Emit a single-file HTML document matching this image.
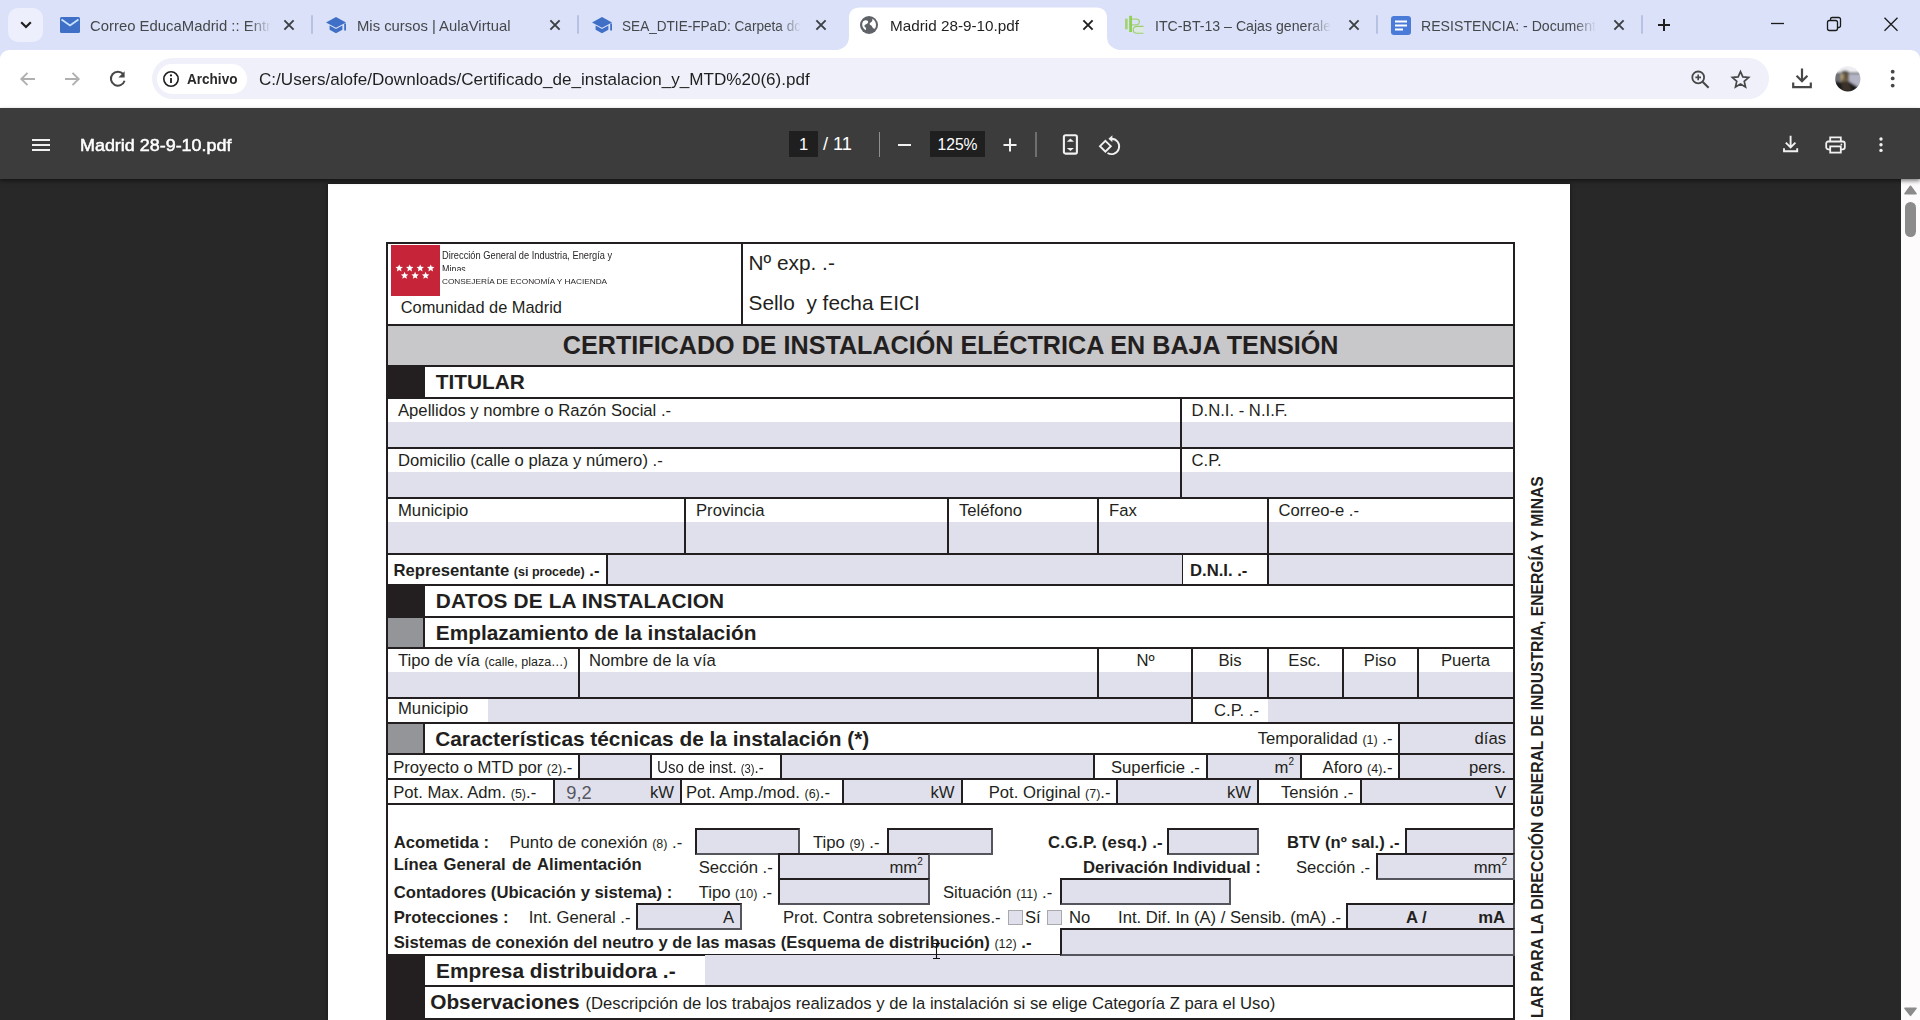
<!DOCTYPE html>
<html lang="es"><head><meta charset="utf-8"><title>Madrid 28-9-10.pdf</title>
<style>
html,body{margin:0;padding:0}
body{width:1920px;height:1020px;overflow:hidden;position:relative;background:#282828;font-family:"Liberation Sans",sans-serif;}
.t{position:absolute;white-space:pre;margin:0;padding:0}
.s{font-size:12.5px}
svg{position:absolute;overflow:visible}
</style></head><body>
<div style="position:absolute;left:0px;top:0px;width:1920px;height:62px;background:#dae1f8;"></div>
<div style="position:absolute;left:0px;top:50px;width:1920px;height:58px;background:#ffffff;border-radius:9px 9px 0 0;"></div>
<div style="position:absolute;left:8px;top:8px;width:35px;height:34px;background:#eeeffc;border-radius:10px;"></div>
<svg style="left:19px;top:20px" width="14" height="10" viewBox="0 0 14 10"><path d="M2.2 2.2L7 7l4.8-4.8" fill="none" stroke="#1f1f1f" stroke-width="2.2"/></svg>
<svg style="left:0;top:0" width="1920" height="51"><path d="M832 50.5 C843 50 849 46 849 36 L849 18 C849 11 853 7.5 860 7.5 L1096 7.5 C1103 7.5 1107 11 1107 18 L1107 36 C1107 46 1113 50 1125 50.5 L1125 51 L832 51 Z" fill="#fff"/></svg>
<svg style="left:60px;top:17px" width="20" height="16" viewBox="0 0 20 16"><rect width="20" height="16" rx="1.5" fill="#3f6fc6"/><path d="M1.5 2.5L10 8.5L18.5 2.5" fill="none" stroke="#c9e4ff" stroke-width="1.8"/></svg>
<div class="t" style="left:90px;top:17.00px;font-size:15.0px;line-height:18.0px;color:#45474a;transform:scaleX(0.9913);transform-origin:left;width:182.58px;overflow:hidden;-webkit-mask-image:linear-gradient(90deg,#000 160.39px,transparent 182.58px);mask-image:linear-gradient(90deg,#000 160.39px,transparent 182.58px);">Correo EducaMadrid :: Entr</div>
<svg style="left:281px;top:17px" width="16" height="16" viewBox="-8 -8 16 16"><path d="M-4.6 -4.6L4.6 4.6M4.6 -4.6L-4.6 4.6" stroke="#3c4043" stroke-width="1.9" fill="none"/></svg>
<div style="position:absolute;left:311px;top:15px;width:2px;height:19px;background:#b7c1e2;border-radius:1px;"></div>
<svg style="left:326px;top:16.5px" width="21" height="17" viewBox="0 0 21 17"><path d="M10 0L0 5.4L10 10.8L20 5.4Z" fill="#3f6fc6"/><path d="M3.6 8.6v4.1L10 16.2l6.4-3.5V8.6L10 12.1Z" fill="#3f6fc6"/><path d="M18.2 6.4h1.8v7h-1.8z" fill="#3f6fc6"/></svg>
<div class="t" style="left:356.5px;top:17.00px;font-size:15.0px;line-height:18.0px;color:#45474a;transform:scaleX(0.9881);transform-origin:left;">Mis cursos | AulaVirtual</div>
<svg style="left:547px;top:17px" width="16" height="16" viewBox="-8 -8 16 16"><path d="M-4.6 -4.6L4.6 4.6M4.6 -4.6L-4.6 4.6" stroke="#3c4043" stroke-width="1.9" fill="none"/></svg>
<div style="position:absolute;left:577px;top:15px;width:2px;height:19px;background:#b7c1e2;border-radius:1px;"></div>
<svg style="left:592px;top:16.5px" width="21" height="17" viewBox="0 0 21 17"><path d="M10 0L0 5.4L10 10.8L20 5.4Z" fill="#3f6fc6"/><path d="M3.6 8.6v4.1L10 16.2l6.4-3.5V8.6L10 12.1Z" fill="#3f6fc6"/><path d="M18.2 6.4h1.8v7h-1.8z" fill="#3f6fc6"/></svg>
<div class="t" style="left:622px;top:17.00px;font-size:15.0px;line-height:18.0px;color:#45474a;transform:scaleX(0.9060);transform-origin:left;width:197.58px;overflow:hidden;-webkit-mask-image:linear-gradient(90deg,#000 173.29px,transparent 197.58px);mask-image:linear-gradient(90deg,#000 173.29px,transparent 197.58px);">SEA_DTIE-FPaD: Carpeta dc</div>
<svg style="left:813px;top:17px" width="16" height="16" viewBox="-8 -8 16 16"><path d="M-4.6 -4.6L4.6 4.6M4.6 -4.6L-4.6 4.6" stroke="#3c4043" stroke-width="1.9" fill="none"/></svg>
<svg style="left:860px;top:16px" width="18" height="18" viewBox="0 0 18 18"><circle cx="9" cy="9" r="9" fill="#5f6368"/><path d="M3.2 5.2C5 3.8 7.2 4 8 5.2C8.8 6.6 7 7.8 5.6 8.4C4.2 9 4 10.4 5.2 11.2C6.2 11.8 6.4 13 5.6 14.2C3.6 13 2.2 11 2.2 8.6C2.2 7.2 2.6 6 3.2 5.2Z" fill="#fff"/><path d="M12.2 2.8C14.6 4 16 6.4 16 9C16 10.4 15.6 11.6 15 12.6C13.6 12.8 12.4 12 12.2 10.8C12 9.6 10.4 9.6 9.8 8.6C9.2 7.4 10.4 6.4 11.4 6C12.4 5.4 12.6 4 12.2 2.8Z" fill="#fff"/></svg>
<div class="t" style="left:889.5px;top:17.00px;font-size:15.0px;line-height:18.0px;color:#1f1f1f;transform:scaleX(1.0178);transform-origin:left;">Madrid 28-9-10.pdf</div>
<svg style="left:1079.5px;top:17px" width="16" height="16" viewBox="-8 -8 16 16"><path d="M-4.6 -4.6L4.6 4.6M4.6 -4.6L-4.6 4.6" stroke="#1f1f1f" stroke-width="1.9" fill="none"/></svg>
<svg style="left:1124px;top:15px" width="22" height="20" viewBox="0 0 22 20"><rect x="1.100" y="3.700" width="2.500" height="10.600" fill="#a2d070"/><rect x="5.200" y="0.800" width="2.800" height="16.200" fill="#90d24f"/><path d="M8 4.200h4c4.500 0 4.500 5.600 0 5.600h-4" fill="none" stroke="#a5d47a" stroke-width="1.300"/><path d="M19.500 11.400h-6.500c-5 0-5 6.800 0 6.800h6.500" fill="#dcefd0" fill-opacity=".6" stroke="#9ccf6c" stroke-width="1.100"/></svg>
<div class="t" style="left:1155px;top:17.00px;font-size:15.0px;line-height:18.0px;color:#45474a;transform:scaleX(0.9424);transform-origin:left;width:186.76px;overflow:hidden;-webkit-mask-image:linear-gradient(90deg,#000 163.41px,transparent 186.76px);mask-image:linear-gradient(90deg,#000 163.41px,transparent 186.76px);">ITC-BT-13 – Cajas generale</div>
<svg style="left:1346px;top:17px" width="16" height="16" viewBox="-8 -8 16 16"><path d="M-4.6 -4.6L4.6 4.6M4.6 -4.6L-4.6 4.6" stroke="#3c4043" stroke-width="1.9" fill="none"/></svg>
<div style="position:absolute;left:1376px;top:15px;width:2px;height:19px;background:#b7c1e2;border-radius:1px;"></div>
<svg style="left:1391px;top:15.5px" width="20" height="19" viewBox="0 0 20 19"><rect width="20" height="19" rx="3" fill="#4a7bd8"/><path d="M4 5.6h12M4 9.5h12M4 13.4h8" stroke="#fff" stroke-width="2"/></svg>
<div class="t" style="left:1421px;top:17.00px;font-size:15.0px;line-height:18.0px;color:#45474a;transform:scaleX(0.9414);transform-origin:left;width:185.89px;overflow:hidden;-webkit-mask-image:linear-gradient(90deg,#000 162.52px,transparent 185.89px);mask-image:linear-gradient(90deg,#000 162.52px,transparent 185.89px);">RESISTENCIA: - Document</div>
<svg style="left:1611px;top:17px" width="16" height="16" viewBox="-8 -8 16 16"><path d="M-4.6 -4.6L4.6 4.6M4.6 -4.6L-4.6 4.6" stroke="#3c4043" stroke-width="1.9" fill="none"/></svg>
<div style="position:absolute;left:1641px;top:15px;width:2px;height:19px;background:#b7c1e2;border-radius:1px;"></div>
<svg style="left:1656px;top:17px" width="16" height="16" viewBox="0 0 16 16"><path d="M8 2v12M2 8h12" stroke="#1f1f1f" stroke-width="2" fill="none"/></svg>
<svg style="left:1760px;top:10px" width="150" height="30" viewBox="0 0 150 30"><g fill="none" stroke="#1b1b1b" stroke-width="1.3"><path d="M11 13.5h13"/><rect x="67.5" y="10.5" width="10" height="10" rx="2"/><path d="M70.5 10.5v-1.2a1.8 1.8 0 0 1 1.8-1.8h6.4a1.8 1.8 0 0 1 1.8 1.8v6.4a1.8 1.8 0 0 1 -1.8 1.8h-1.2"/><path d="M124.5 7.8l13 13M137.5 7.8l-13 13"/></g></svg>
<svg style="left:18px;top:69px" width="20" height="20" viewBox="0 0 20 20"><path d="M17 10H3.5M9.5 3.8L3.3 10l6.2 6.2" fill="none" stroke="#b0b0b0" stroke-width="1.9"/></svg>
<svg style="left:62px;top:69px" width="20" height="20" viewBox="0 0 20 20"><path d="M3 10h13.5M10.5 3.8L16.7 10l-6.2 6.2" fill="none" stroke="#b0b0b0" stroke-width="1.9"/></svg>
<svg style="left:107px;top:68px" width="22" height="22" viewBox="0 0 22 22"><path d="M16.3 6.2A7 7 0 1 0 17.6 12.8" fill="none" stroke="#474747" stroke-width="2"/><path d="M17.6 3.2v6.2h-6.2z" fill="#474747"/></svg>
<div style="position:absolute;left:152px;top:58px;width:1617px;height:41px;background:#f0f0fb;border-radius:20.5px;"></div>
<div style="position:absolute;left:157px;top:64px;width:90px;height:30px;background:#ffffff;border-radius:15px;"></div>
<svg style="left:162px;top:70px" width="18" height="18" viewBox="0 0 18 18"><circle cx="9" cy="9" r="7.2" fill="none" stroke="#1f1f1f" stroke-width="1.6"/><path d="M9 8v5" stroke="#1f1f1f" stroke-width="1.8"/><circle cx="9" cy="5.4" r="1.1" fill="#1f1f1f"/></svg>
<div class="t" style="left:187px;top:72.30px;font-size:13.56px;line-height:16.27px;font-weight:700;color:#2a2a2a;transform:scaleY(1.04);">Archivo</div>
<div class="t" style="left:259px;top:70.00px;font-size:17.1px;line-height:20.52px;color:#1f1f1f;transform:scaleX(0.9995);transform-origin:left;">C:/Users/alofe/Downloads/Certificado_de_instalacion_y_MTD%20(6).pdf</div>
<svg style="left:1690px;top:69px" width="21" height="21" viewBox="0 0 21 21"><circle cx="8.2" cy="8.4" r="5.9" fill="none" stroke="#474747" stroke-width="1.8"/><path d="M12.6 12.8l6 6" stroke="#474747" stroke-width="2.1"/><path d="M8.2 5.6v5.6M5.4 8.4h5.6" stroke="#474747" stroke-width="1.6"/></svg>
<svg style="left:1730px;top:69px" width="21" height="21" viewBox="0 0 21 21"><path d="M10.5 2.6l2.35 5.35 5.8.55-4.4 3.85 1.3 5.7-5.05-3-5.05 3 1.3-5.7-4.4-3.85 5.8-.55z" fill="none" stroke="#474747" stroke-width="1.7" stroke-linejoin="miter"/></svg>
<svg style="left:1791px;top:67px" width="22" height="22" viewBox="0 0 22 22"><path d="M11 1.5v12.5M5.6 8.8L11 14.2l5.4-5.4" fill="none" stroke="#474747" stroke-width="2.2"/><path d="M2.2 15.5v4.6h17.6v-4.6" fill="none" stroke="#474747" stroke-width="2.2"/></svg>
<svg style="left:1834.5px;top:65.5px" width="26" height="26" viewBox="0 0 26 26"><defs><clipPath id="av"><circle cx="12.8" cy="12.8" r="12.6"/></clipPath><filter id="avb" x="-10%" y="-10%" width="120%" height="120%"><feGaussianBlur stdDeviation="0.9"/></filter></defs><g clip-path="url(#av)"><g filter="url(#avb)"><rect x="-2" y="-2" width="30" height="30" fill="#eceef1"/><rect x="-2" y="7" width="30" height="22" fill="#9a9aa6"/><rect x="-2" y="6.600" width="30" height="1.6" fill="#4a4a50"/><rect x="-2" y="7.500" width="7" height="9" fill="#707076"/><path d="M14 8h14v12l-6 3-8-8z" fill="#b4b5c4"/><path d="M-2 15l8 1 7-1 10 6 5 -1v10h-30z" fill="#1f1b1d"/><ellipse cx="9.600" cy="11.5" rx="4.400" ry="6.200" fill="#6a5d42"/><ellipse cx="7" cy="10.5" rx="1.300" ry="3.600" fill="#b3a47c"/><ellipse cx="10" cy="6.200" rx="3.800" ry="1.800" fill="#55504a"/><ellipse cx="11.600" cy="10" rx="1" ry=".8" fill="#3a3226"/><path d="M6.500 16l7 -1 3 10h-9z" fill="#3a322a"/></g></g></svg>
<svg style="left:1889px;top:68px" width="8" height="22" viewBox="0 0 8 22"><circle cx="3.7" cy="3.7" r="1.9" fill="#474747"/><circle cx="3.7" cy="10.4" r="1.9" fill="#474747"/><circle cx="3.7" cy="17.6" r="1.9" fill="#474747"/></svg>
<div style="position:absolute;left:0px;top:108px;width:1920px;height:71px;background:#3c3c3c;box-shadow:0 2px 4px rgba(0,0,0,.5);z-index:2;"></div>
<div style="position:absolute;left:32px;top:139px;width:17.5px;height:2px;background:#f1f1f1;z-index:3;"></div>
<div style="position:absolute;left:32px;top:144px;width:17.5px;height:2px;background:#f1f1f1;z-index:3;"></div>
<div style="position:absolute;left:32px;top:149px;width:17.5px;height:2px;background:#f1f1f1;z-index:3;"></div>
<div class="t" style="left:80.3px;top:135.50px;font-size:16.6px;line-height:19.92px;color:#ffffff;z-index:3;-webkit-text-stroke:.5px #fff;transform:scaleX(1.0801);transform-origin:left;">Madrid 28-9-10.pdf</div>
<div style="position:absolute;left:789px;top:131px;width:29px;height:26px;background:#1f1f1f;z-index:3;"></div>
<div class="t" style="left:803.5px;transform:translateX(-50%);top:135.00px;font-size:16.5px;line-height:19.8px;color:#ffffff;z-index:3;">1</div>
<div class="t" style="left:823px;top:134.00px;font-size:18.2px;line-height:21.84px;color:#ffffff;z-index:3;">/ 11</div>
<div style="position:absolute;left:878.5px;top:132px;width:1.5px;height:25px;background:#8f8f8f;z-index:3;"></div>
<div style="position:absolute;left:898px;top:144px;width:13px;height:2px;background:#f1f1f1;z-index:3;"></div>
<div style="position:absolute;left:930px;top:131px;width:55px;height:26px;background:#1f1f1f;z-index:3;"></div>
<div class="t" style="left:957.5px;transform:translateX(-50%);top:136.00px;font-size:15.64px;line-height:18.77px;color:#ffffff;z-index:3;">125%</div>
<svg style="left:1003px;top:138px;z-index:3;" width="14" height="14" viewBox="0 0 14 14"><path d="M7 0.5v13M0.5 7h13" stroke="#f1f1f1" stroke-width="2"/></svg>
<div style="position:absolute;left:1035px;top:132px;width:1.5px;height:25px;background:#6f6f6f;z-index:3;"></div>
<svg style="left:1062px;top:134px;z-index:3;" width="17" height="21" viewBox="0 0 17 21"><rect x="1.9" y="1.2" width="13" height="18.4" rx="1.6" fill="none" stroke="#f1f1f1" stroke-width="2.1"/><path d="M8.4 4.600l3.600 3.200h-7.200zM8.4 17.100l3.600-3.200h-7.200z" fill="#f1f1f1"/></svg>
<svg style="left:1098px;top:133px;z-index:3;" width="24" height="24" viewBox="0 0 24 24"><path d="M7.400 7.800l5.400 5.400-5.400 5.400-5.400-5.400z" fill="none" stroke="#f1f1f1" stroke-width="1.9"/><path d="M13.500 5.700a7.700 7.700 0 1 1 -4 14.300" fill="none" stroke="#f1f1f1" stroke-width="1.9"/><path d="M14.400 2.200v7l-4-3.500z" fill="#f1f1f1"/></svg>
<svg style="left:1783px;top:135px;z-index:3;" width="16" height="18" viewBox="0 0 16 18"><path d="M7.600 0.700v11.300M2.800 7.600l4.800 4.800 4.800-4.800" fill="none" stroke="#f1f1f1" stroke-width="1.9"/><path d="M1 13.300v3h13.200v-3" fill="none" stroke="#f1f1f1" stroke-width="1.9"/></svg>
<svg style="left:1825px;top:135.500px;z-index:3;" width="21" height="18" viewBox="0 0 21 18"><path d="M5.200 5.500V1.400h10.600V5.500" fill="none" stroke="#f1f1f1" stroke-width="1.8"/><rect x="1.200" y="5.500" width="18.600" height="7.800" rx="2" fill="none" stroke="#f1f1f1" stroke-width="1.8"/><rect x="5.200" y="10.400" width="10.600" height="6.200" fill="#3c3c3c" stroke="#f1f1f1" stroke-width="1.8"/><circle cx="16.400" cy="8.400" r=".9" fill="#f1f1f1"/></svg>
<svg style="left:1877.600px;top:136px;z-index:3;" width="6" height="18" viewBox="0 0 6 18"><circle cx="3" cy="3" r="1.700" fill="#f1f1f1"/><circle cx="3" cy="8.700" r="1.700" fill="#f1f1f1"/><circle cx="3" cy="14.400" r="1.700" fill="#f1f1f1"/></svg>
<div style="position:absolute;left:0px;top:179px;width:1920px;height:841px;background:#282828;"></div>
<div style="position:absolute;left:328px;top:184px;width:1242px;height:836px;background:#ffffff;box-shadow:0 0 4px rgba(0,0,0,.5);"></div>
<div style="position:absolute;left:386px;top:326px;width:1127px;height:39px;background:#c8c7c9;"></div>
<div style="position:absolute;left:386px;top:366px;width:39px;height:32px;background:#231f20;"></div>
<div style="position:absolute;left:386px;top:586px;width:39px;height:31px;background:#231f20;"></div>
<div style="position:absolute;left:386px;top:618px;width:37px;height:29px;background:#939598;"></div>
<div style="position:absolute;left:386px;top:724px;width:37px;height:29px;background:#939598;"></div>
<div style="position:absolute;left:386px;top:956px;width:39px;height:62px;background:#231f20;"></div>
<div style="position:absolute;left:388px;top:422px;width:792px;height:25px;background:#e0e0ec;"></div>
<div style="position:absolute;left:1182px;top:422px;width:331px;height:25px;background:#e0e0ec;"></div>
<div style="position:absolute;left:388px;top:472px;width:792px;height:25px;background:#e0e0ec;"></div>
<div style="position:absolute;left:1182px;top:472px;width:331px;height:25px;background:#e0e0ec;"></div>
<div style="position:absolute;left:388px;top:522px;width:296px;height:31px;background:#e0e0ec;"></div>
<div style="position:absolute;left:686px;top:522px;width:261px;height:31px;background:#e0e0ec;"></div>
<div style="position:absolute;left:949px;top:522px;width:148px;height:31px;background:#e0e0ec;"></div>
<div style="position:absolute;left:1099px;top:522px;width:168px;height:31px;background:#e0e0ec;"></div>
<div style="position:absolute;left:1269px;top:522px;width:244px;height:31px;background:#e0e0ec;"></div>
<div style="position:absolute;left:608px;top:555px;width:574px;height:29px;background:#e0e0ec;"></div>
<div style="position:absolute;left:1269px;top:555px;width:244px;height:29px;background:#e0e0ec;"></div>
<div style="position:absolute;left:388px;top:672px;width:190px;height:25px;background:#e0e0ec;"></div>
<div style="position:absolute;left:580px;top:672px;width:517px;height:25px;background:#e0e0ec;"></div>
<div style="position:absolute;left:1099px;top:672px;width:92px;height:25px;background:#e0e0ec;"></div>
<div style="position:absolute;left:1193px;top:672px;width:74px;height:25px;background:#e0e0ec;"></div>
<div style="position:absolute;left:1269px;top:672px;width:73px;height:25px;background:#e0e0ec;"></div>
<div style="position:absolute;left:1344px;top:672px;width:73px;height:25px;background:#e0e0ec;"></div>
<div style="position:absolute;left:1419px;top:672px;width:94px;height:25px;background:#e0e0ec;"></div>
<div style="position:absolute;left:488px;top:699px;width:703px;height:23px;background:#e0e0ec;"></div>
<div style="position:absolute;left:1268px;top:699px;width:245px;height:23px;background:#e0e0ec;"></div>
<div style="position:absolute;left:1400px;top:724px;width:113px;height:29px;background:#e0e0ec;"></div>
<div style="position:absolute;left:580px;top:755px;width:70px;height:23px;background:#e0e0ec;"></div>
<div style="position:absolute;left:782px;top:755px;width:311px;height:23px;background:#e0e0ec;"></div>
<div style="position:absolute;left:1208px;top:755px;width:92px;height:23px;background:#e0e0ec;"></div>
<div style="position:absolute;left:1400px;top:755px;width:113px;height:23px;background:#e0e0ec;"></div>
<div style="position:absolute;left:555px;top:780px;width:125px;height:23px;background:#e0e0ec;"></div>
<div style="position:absolute;left:844px;top:780px;width:117px;height:23px;background:#e0e0ec;"></div>
<div style="position:absolute;left:1118px;top:780px;width:139px;height:23px;background:#e0e0ec;"></div>
<div style="position:absolute;left:1362px;top:780px;width:151px;height:23px;background:#e0e0ec;"></div>
<div style="position:absolute;left:705px;top:956px;width:808px;height:29px;background:#e0e0ec;"></div>
<div style="position:absolute;left:386px;top:242px;width:2px;height:778px;background:#231f20;"></div>
<div style="position:absolute;left:1513px;top:242px;width:2px;height:778px;background:#231f20;"></div>
<div style="position:absolute;left:386px;top:242px;width:1129px;height:2px;background:#231f20;"></div>
<div style="position:absolute;left:386px;top:324px;width:1129px;height:2px;background:#231f20;"></div>
<div style="position:absolute;left:386px;top:365px;width:1129px;height:2px;background:#231f20;"></div>
<div style="position:absolute;left:386px;top:397px;width:1129px;height:2px;background:#231f20;"></div>
<div style="position:absolute;left:386px;top:447px;width:1129px;height:2px;background:#231f20;"></div>
<div style="position:absolute;left:386px;top:497px;width:1129px;height:2px;background:#231f20;"></div>
<div style="position:absolute;left:386px;top:553px;width:1129px;height:2px;background:#231f20;"></div>
<div style="position:absolute;left:386px;top:584px;width:1129px;height:2px;background:#231f20;"></div>
<div style="position:absolute;left:386px;top:616px;width:1129px;height:2px;background:#231f20;"></div>
<div style="position:absolute;left:386px;top:647px;width:1129px;height:2px;background:#231f20;"></div>
<div style="position:absolute;left:386px;top:697px;width:1129px;height:2px;background:#231f20;"></div>
<div style="position:absolute;left:386px;top:722px;width:1129px;height:2px;background:#231f20;"></div>
<div style="position:absolute;left:386px;top:753px;width:1129px;height:2px;background:#231f20;"></div>
<div style="position:absolute;left:386px;top:778px;width:1129px;height:2px;background:#231f20;"></div>
<div style="position:absolute;left:386px;top:803px;width:1129px;height:2px;background:#231f20;"></div>
<div style="position:absolute;left:386px;top:954px;width:1129px;height:2px;background:#231f20;"></div>
<div style="position:absolute;left:425px;top:985px;width:1090px;height:2px;background:#231f20;"></div>
<div style="position:absolute;left:386px;top:1018px;width:1129px;height:2px;background:#231f20;"></div>
<div style="position:absolute;left:741px;top:242px;width:2px;height:84px;background:#231f20;"></div>
<div style="position:absolute;left:423px;top:616px;width:2px;height:33px;background:#231f20;"></div>
<div style="position:absolute;left:423px;top:722px;width:2px;height:33px;background:#231f20;"></div>
<div style="position:absolute;left:1180px;top:397px;width:2px;height:102px;background:#231f20;"></div>
<div style="position:absolute;left:684px;top:497px;width:2px;height:58px;background:#231f20;"></div>
<div style="position:absolute;left:947px;top:497px;width:2px;height:58px;background:#231f20;"></div>
<div style="position:absolute;left:1097px;top:497px;width:2px;height:58px;background:#231f20;"></div>
<div style="position:absolute;left:1267px;top:497px;width:2px;height:58px;background:#231f20;"></div>
<div style="position:absolute;left:606px;top:553px;width:2px;height:33px;background:#231f20;"></div>
<div style="position:absolute;left:1182px;top:555px;width:1px;height:31px;background:#231f20;"></div>
<div style="position:absolute;left:1267px;top:553px;width:2px;height:33px;background:#231f20;"></div>
<div style="position:absolute;left:578px;top:647px;width:2px;height:52px;background:#231f20;"></div>
<div style="position:absolute;left:1097px;top:647px;width:2px;height:52px;background:#231f20;"></div>
<div style="position:absolute;left:1191px;top:647px;width:2px;height:52px;background:#231f20;"></div>
<div style="position:absolute;left:1267px;top:647px;width:2px;height:52px;background:#231f20;"></div>
<div style="position:absolute;left:1342px;top:647px;width:2px;height:52px;background:#231f20;"></div>
<div style="position:absolute;left:1417px;top:647px;width:2px;height:52px;background:#231f20;"></div>
<div style="position:absolute;left:1191px;top:697px;width:2px;height:27px;background:#231f20;"></div>
<div style="position:absolute;left:1398px;top:722px;width:2px;height:58px;background:#231f20;"></div>
<div style="position:absolute;left:578px;top:753px;width:2px;height:27px;background:#231f20;"></div>
<div style="position:absolute;left:650px;top:753px;width:2px;height:27px;background:#231f20;"></div>
<div style="position:absolute;left:780px;top:753px;width:2px;height:27px;background:#231f20;"></div>
<div style="position:absolute;left:1093px;top:753px;width:2px;height:27px;background:#231f20;"></div>
<div style="position:absolute;left:1206px;top:753px;width:2px;height:27px;background:#231f20;"></div>
<div style="position:absolute;left:1300px;top:753px;width:2px;height:27px;background:#231f20;"></div>
<div style="position:absolute;left:553px;top:778px;width:2px;height:27px;background:#231f20;"></div>
<div style="position:absolute;left:680px;top:778px;width:2px;height:27px;background:#231f20;"></div>
<div style="position:absolute;left:842px;top:778px;width:2px;height:27px;background:#231f20;"></div>
<div style="position:absolute;left:961px;top:778px;width:2px;height:27px;background:#231f20;"></div>
<div style="position:absolute;left:1116px;top:778px;width:2px;height:27px;background:#231f20;"></div>
<div style="position:absolute;left:1257px;top:778px;width:2px;height:27px;background:#231f20;"></div>
<div style="position:absolute;left:1360px;top:778px;width:2px;height:27px;background:#231f20;"></div>
<div style="position:absolute;left:705px;top:955px;width:808px;height:1px;background:#e0e0ec;"></div>
<div style="position:absolute;left:695px;top:828px;width:105px;height:27px;background:#e0e0ec;box-sizing:border-box;border:2px solid #231f20;border-right-color:#55555d;border-bottom-color:#55555d;"></div>
<div style="position:absolute;left:887px;top:828px;width:106px;height:27px;background:#e0e0ec;box-sizing:border-box;border:2px solid #231f20;border-right-color:#55555d;border-bottom-color:#55555d;"></div>
<div style="position:absolute;left:1167px;top:828px;width:92px;height:27px;background:#e0e0ec;box-sizing:border-box;border:2px solid #231f20;border-right-color:#55555d;border-bottom-color:#55555d;"></div>
<div style="position:absolute;left:1405px;top:828px;width:110px;height:27px;background:#e0e0ec;box-sizing:border-box;border:2px solid #231f20;border-right-color:#55555d;border-bottom-color:#55555d;"></div>
<div style="position:absolute;left:778px;top:853px;width:152px;height:27px;background:#e0e0ec;box-sizing:border-box;border:2px solid #231f20;border-right-color:#55555d;border-bottom-color:#55555d;"></div>
<div style="position:absolute;left:1376px;top:853px;width:139px;height:27px;background:#e0e0ec;box-sizing:border-box;border:2px solid #231f20;border-right-color:#55555d;border-bottom-color:#55555d;"></div>
<div style="position:absolute;left:778px;top:878px;width:152px;height:27px;background:#e0e0ec;box-sizing:border-box;border:2px solid #231f20;border-right-color:#55555d;border-bottom-color:#55555d;"></div>
<div style="position:absolute;left:1060px;top:878px;width:171px;height:27px;background:#e0e0ec;box-sizing:border-box;border:2px solid #231f20;border-right-color:#55555d;border-bottom-color:#55555d;"></div>
<div style="position:absolute;left:636px;top:903px;width:106px;height:27px;background:#e0e0ec;box-sizing:border-box;border:2px solid #231f20;border-right-color:#55555d;border-bottom-color:#55555d;"></div>
<div style="position:absolute;left:1346px;top:903px;width:169px;height:27px;background:#e0e0ec;box-sizing:border-box;border:2px solid #231f20;border-right-color:#55555d;border-bottom-color:#55555d;"></div>
<div style="position:absolute;left:1060px;top:928px;width:455px;height:28px;background:#e0e0ec;box-sizing:border-box;border:2px solid #231f20;border-right-color:#55555d;border-bottom-color:#55555d;"></div>
<div style="position:absolute;left:1007.5px;top:910px;width:15px;height:15px;background:#e0e0ec;box-sizing:border-box;border:1.5px solid #a7a9ac;"></div>
<div style="position:absolute;left:1047px;top:910px;width:15px;height:15px;background:#e0e0ec;box-sizing:border-box;border:1.5px solid #a7a9ac;"></div>
<div style="position:absolute;left:391px;top:245px;width:48.5px;height:50.5px;background:#c52439;"></div>
<svg style="left:0;top:0" width="1920" height="1020"><polygon points="399.20,264.40 400.25,266.85 402.91,267.09 400.91,268.85 401.49,271.46 399.20,270.09 396.91,271.46 397.49,268.85 395.49,267.09 398.15,266.85" fill="#fff"/><polygon points="409.70,264.40 410.75,266.85 413.41,267.09 411.41,268.85 411.99,271.46 409.70,270.09 407.41,271.46 407.99,268.85 405.99,267.09 408.65,266.85" fill="#fff"/><polygon points="420.20,264.40 421.25,266.85 423.91,267.09 421.91,268.85 422.49,271.46 420.20,270.09 417.91,271.46 418.49,268.85 416.49,267.09 419.15,266.85" fill="#fff"/><polygon points="430.70,264.40 431.75,266.85 434.41,267.09 432.41,268.85 432.99,271.46 430.70,270.09 428.41,271.46 428.99,268.85 426.99,267.09 429.65,266.85" fill="#fff"/><polygon points="404.60,271.70 405.65,274.15 408.31,274.39 406.31,276.15 406.89,278.76 404.60,277.39 402.31,278.76 402.89,276.15 400.89,274.39 403.55,274.15" fill="#fff"/><polygon points="415.10,271.70 416.15,274.15 418.81,274.39 416.81,276.15 417.39,278.76 415.10,277.39 412.81,278.76 413.39,276.15 411.39,274.39 414.05,274.15" fill="#fff"/><polygon points="425.60,271.70 426.65,274.15 429.31,274.39 427.31,276.15 427.89,278.76 425.60,277.39 423.31,278.76 423.89,276.15 421.89,274.39 424.55,274.15" fill="#fff"/></svg>
<div class="t" style="left:442.3px;top:250.20px;font-size:10.4px;line-height:12.48px;color:#2a2627;transform:scaleX(.893);transform-origin:left;">Dirección General de Industria, Energía y</div>
<div style="position:absolute;left:440px;top:260px;width:60px;height:10.8px;overflow:hidden">
<div class="t" style="left:2.3px;top:3.60px;font-size:10px;line-height:12.0px;color:#2a2627;transform:scaleX(.893);transform-origin:left;">Minas</div>
</div>
<div class="t" style="left:442.3px;top:276.70px;font-size:7.9px;line-height:9.48px;color:#2a2627;transform:scaleX(1.045);transform-origin:left;">CONSEJERÍA DE ECONOMÍA Y HACIENDA</div>
<div class="t" style="left:400.7px;top:297.50px;font-size:16.4px;line-height:19.68px;color:#231f20;">Comunidad de Madrid</div>
<div class="t" style="left:748.5px;top:250.00px;font-size:20.83px;line-height:25.0px;color:#231f20;">Nº exp. .-</div>
<div class="t" style="left:748.5px;top:290.00px;font-size:20.83px;line-height:25.0px;color:#231f20;">Sello  y fecha EICI</div>
<div class="t" style="left:950.7px;transform:translateX(-50%);top:329.70px;font-size:25.15px;line-height:30.18px;font-weight:700;color:#231f20;">CERTIFICADO DE INSTALACIÓN ELÉCTRICA EN BAJA TENSIÓN</div>
<div class="t" style="left:435.8px;top:368.80px;font-size:20.83px;line-height:25.0px;font-weight:700;color:#231f20;">TITULAR</div>
<div class="t" style="left:398px;top:400.70px;font-size:16.67px;line-height:20.0px;color:#231f20;">Apellidos y nombre o Razón Social .-</div>
<div class="t" style="left:1191.5px;top:400.70px;font-size:16.67px;line-height:20.0px;color:#231f20;">D.N.I. - N.I.F.</div>
<div class="t" style="left:398px;top:450.70px;font-size:16.67px;line-height:20.0px;color:#231f20;">Domicilio (calle o plaza y número) .-</div>
<div class="t" style="left:1191.5px;top:450.70px;font-size:16.67px;line-height:20.0px;color:#231f20;">C.P.</div>
<div class="t" style="left:398px;top:500.70px;font-size:16.67px;line-height:20.0px;color:#231f20;">Municipio</div>
<div class="t" style="left:696px;top:500.70px;font-size:16.67px;line-height:20.0px;color:#231f20;">Provincia</div>
<div class="t" style="left:959px;top:500.70px;font-size:16.67px;line-height:20.0px;color:#231f20;">Teléfono</div>
<div class="t" style="left:1109px;top:500.70px;font-size:16.67px;line-height:20.0px;color:#231f20;">Fax</div>
<div class="t" style="left:1278.5px;top:500.70px;font-size:16.67px;line-height:20.0px;color:#231f20;">Correo-e .-</div>
<div class="t" style="left:393.5px;top:560.50px;font-size:16.67px;line-height:20.0px;font-weight:700;color:#231f20;">Representante <span class="s">(si procede)</span> .-</div>
<div class="t" style="left:1190px;top:560.50px;font-size:16.67px;line-height:20.0px;font-weight:700;color:#231f20;">D.N.I. .-</div>
<div class="t" style="left:435.8px;top:587.80px;font-size:20.83px;line-height:25.0px;font-weight:700;color:#231f20;letter-spacing:.15px;">DATOS DE LA INSTALACION</div>
<div class="t" style="left:435.8px;top:620.00px;font-size:20.83px;line-height:25.0px;font-weight:700;color:#231f20;">Emplazamiento de la instalación</div>
<div class="t" style="left:398px;top:650.90px;font-size:16.67px;line-height:20.0px;color:#231f20;">Tipo de vía <span class="s">(calle, plaza…)</span></div>
<div class="t" style="left:589px;top:650.90px;font-size:16.67px;line-height:20.0px;color:#231f20;">Nombre de la vía</div>
<div class="t" style="left:1145.5px;transform:translateX(-50%);top:650.90px;font-size:16.67px;line-height:20.0px;color:#231f20;">Nº</div>
<div class="t" style="left:1230px;transform:translateX(-50%);top:650.90px;font-size:16.67px;line-height:20.0px;color:#231f20;">Bis</div>
<div class="t" style="left:1304.5px;transform:translateX(-50%);top:650.90px;font-size:16.67px;line-height:20.0px;color:#231f20;">Esc.</div>
<div class="t" style="left:1380px;transform:translateX(-50%);top:650.90px;font-size:16.67px;line-height:20.0px;color:#231f20;">Piso</div>
<div class="t" style="left:1465.5px;transform:translateX(-50%);top:650.90px;font-size:16.67px;line-height:20.0px;color:#231f20;">Puerta</div>
<div class="t" style="left:398px;top:698.50px;font-size:16.67px;line-height:20.0px;color:#231f20;">Municipio</div>
<div class="t" style="left:1214px;top:700.50px;font-size:16.67px;line-height:20.0px;color:#231f20;">C.P. .-</div>
<div class="t" style="left:435.2px;top:726.00px;font-size:20.83px;line-height:25.0px;font-weight:700;color:#231f20;">Características técnicas de la instalación (*)</div>
<div class="t" style="right:527.5px;top:729.00px;font-size:16.67px;line-height:20.0px;color:#231f20;">Temporalidad <span class="s">(1)</span> .-</div>
<div class="t" style="right:414px;top:729.00px;font-size:16.67px;line-height:20.0px;color:#231f20;">días</div>
<div class="t" style="left:393.2px;top:757.70px;font-size:16.67px;line-height:20.0px;color:#231f20;">Proyecto o MTD por <span class="s">(2)</span>.-</div>
<div class="t" style="left:656.6px;top:757.70px;font-size:16.67px;line-height:20.0px;color:#231f20;transform:scaleX(.905);transform-origin:left;">Uso de inst. <span class="s">(3)</span>.-</div>
<div class="t" style="left:1111px;top:757.70px;font-size:16.67px;line-height:20.0px;color:#231f20;">Superficie .-</div>
<div class="t" style="right:626px;top:757.70px;font-size:16.67px;line-height:20.0px;color:#231f20;">m<span style="font-size:10px;position:relative;top:-8px">2</span></div>
<div class="t" style="right:527.5px;top:757.70px;font-size:16.67px;line-height:20.0px;color:#231f20;">Aforo <span class="s">(4)</span>.-</div>
<div class="t" style="right:414px;top:757.70px;font-size:16.67px;line-height:20.0px;color:#231f20;">pers.</div>
<div class="t" style="left:393.2px;top:782.70px;font-size:16.67px;line-height:20.0px;color:#231f20;">Pot. Max. Adm. <span class="s">(5)</span>.-</div>
<div class="t" style="left:566.3px;top:781.80px;font-size:18.3px;line-height:21.96px;color:#565660;">9,2</div>
<div class="t" style="left:650px;top:782.70px;font-size:16.67px;line-height:20.0px;color:#231f20;">kW</div>
<div class="t" style="left:686px;top:782.70px;font-size:16.67px;line-height:20.0px;color:#231f20;">Pot. Amp./mod. <span class="s">(6)</span>.-</div>
<div class="t" style="right:965.5px;top:782.70px;font-size:16.67px;line-height:20.0px;color:#231f20;">kW</div>
<div class="t" style="right:809.5px;top:782.70px;font-size:16.67px;line-height:20.0px;color:#231f20;">Pot. Original <span class="s">(7)</span>.-</div>
<div class="t" style="right:669px;top:782.70px;font-size:16.67px;line-height:20.0px;color:#231f20;">kW</div>
<div class="t" style="left:1281px;top:782.70px;font-size:16.67px;line-height:20.0px;color:#231f20;">Tensión .-</div>
<div class="t" style="right:414px;top:782.70px;font-size:16.67px;line-height:20.0px;color:#231f20;">V</div>
<div class="t" style="left:393.7px;top:832.50px;font-size:16.67px;line-height:20.0px;font-weight:700;color:#231f20;">Acometida :</div>
<div class="t" style="left:509.5px;top:832.50px;font-size:16.67px;line-height:20.0px;color:#231f20;">Punto de conexión <span class="s">(8)</span> .-</div>
<div class="t" style="left:813px;top:832.50px;font-size:16.67px;line-height:20.0px;color:#231f20;">Tipo <span class="s">(9)</span> .-</div>
<div class="t" style="left:1048px;top:832.50px;font-size:16.67px;line-height:20.0px;font-weight:700;color:#231f20;letter-spacing:.19px;">C.G.P. (esq.) .-</div>
<div class="t" style="left:1287px;top:832.50px;font-size:16.67px;line-height:20.0px;font-weight:700;color:#231f20;">BTV (nº sal.) .-</div>
<div class="t" style="left:393.7px;top:855.00px;font-size:16.67px;line-height:20.0px;font-weight:700;color:#231f20;word-spacing:1.7px;">Línea General de Alimentación</div>
<div class="t" style="left:698.7px;top:858.00px;font-size:16.67px;line-height:20.0px;color:#231f20;">Sección .-</div>
<div class="t" style="right:997.3px;top:858.00px;font-size:16.67px;line-height:20.0px;color:#231f20;">mm<span style="font-size:10px;position:relative;top:-8px">2</span></div>
<div class="t" style="left:1083px;top:858.00px;font-size:16.67px;line-height:20.0px;font-weight:700;color:#231f20;">Derivación Individual :</div>
<div class="t" style="left:1296px;top:858.00px;font-size:16.67px;line-height:20.0px;color:#231f20;">Sección .-</div>
<div class="t" style="right:413px;top:858.00px;font-size:16.67px;line-height:20.0px;color:#231f20;">mm<span style="font-size:10px;position:relative;top:-8px">2</span></div>
<div class="t" style="left:393.7px;top:883.00px;font-size:16.67px;line-height:20.0px;font-weight:700;color:#231f20;">Contadores (Ubicación y sistema) :</div>
<div class="t" style="left:698.7px;top:883.00px;font-size:16.67px;line-height:20.0px;color:#231f20;">Tipo <span class="s">(10)</span> .-</div>
<div class="t" style="left:943px;top:883.00px;font-size:16.67px;line-height:20.0px;color:#231f20;">Situación <span class="s">(11)</span> .-</div>
<div class="t" style="left:393.7px;top:908.00px;font-size:16.67px;line-height:20.0px;font-weight:700;color:#231f20;">Protecciones :</div>
<div class="t" style="left:528.7px;top:908.00px;font-size:16.67px;line-height:20.0px;color:#231f20;">Int. General .-</div>
<div class="t" style="right:1186px;top:908.00px;font-size:16.67px;line-height:20.0px;color:#231f20;">A</div>
<div class="t" style="left:783px;top:908.00px;font-size:16.67px;line-height:20.0px;color:#231f20;">Prot. Contra sobretensiones.-</div>
<div class="t" style="left:1025px;top:908.00px;font-size:16.67px;line-height:20.0px;color:#231f20;">Sí</div>
<div class="t" style="left:1069px;top:908.00px;font-size:16.67px;line-height:20.0px;color:#231f20;">No</div>
<div class="t" style="left:1118px;top:908.00px;font-size:16.67px;line-height:20.0px;color:#231f20;">Int. Dif. In (A) / Sensib. (mA) .-</div>
<div class="t" style="left:1406px;top:908.00px;font-size:16.67px;line-height:20.0px;font-weight:700;color:#231f20;">A /</div>
<div class="t" style="right:415px;top:908.00px;font-size:16.67px;line-height:20.0px;font-weight:700;color:#231f20;">mA</div>
<div class="t" style="left:393.7px;top:933.00px;font-size:16.67px;line-height:20.0px;font-weight:700;color:#231f20;">Sistemas de conexión del neutro y de las masas (Esquema de distribución) <span class="s" style="font-weight:400">(12)</span> .-</div>
<div class="t" style="left:436px;top:957.60px;font-size:20.83px;line-height:25.0px;font-weight:700;color:#231f20;">Empresa distribuidora .-</div>
<div class="t" style="left:430.2px;top:989.00px;font-size:20.83px;line-height:25.0px;font-weight:700;color:#231f20;">Observaciones</div>
<div class="t" style="left:585.5px;top:993.50px;font-size:16.67px;line-height:20.0px;color:#231f20;">(Descripción de los trabajos realizados y de la instalación si se elige Categoría Z para el Uso)</div>
<div class="t" style="left:1536.8px;top:1018px;font-size:15.7px;line-height:18.84px;font-weight:700;color:#231f20;transform-origin:0 0;transform:rotate(-90deg) translate(0,-8.38px) ">LAR PARA LA DIRECCIÓN GENERAL DE INDUSTRIA, ENERGÍA Y MINAS</div>
<svg style="left:932px;top:942px" width="10" height="18" viewBox="0 0 10 18"><path d="M1 1.500h7M4.500 1.500v15M1 16.500h7" stroke="#111" stroke-width="1.100" fill="none"/></svg>
<div style="position:absolute;left:1901px;top:179px;width:19px;height:841px;background:#fdfbfb;"></div>
<svg style="left:1901px;top:179px" width="19" height="841"><polygon points="9.5,7.3 15,14.8 4,14.8" fill="#8b8b8b" stroke="#8b8b8b" stroke-width="1.6" stroke-linejoin="round"/><polygon points="9.5,836.3 15,829.3 4,829.3" fill="#8b8b8b" stroke="#8b8b8b" stroke-width="1.6" stroke-linejoin="round"/><rect x="4" y="23" width="11" height="35" rx="5.5" fill="#8b8b8b"/></svg>
</body></html>
